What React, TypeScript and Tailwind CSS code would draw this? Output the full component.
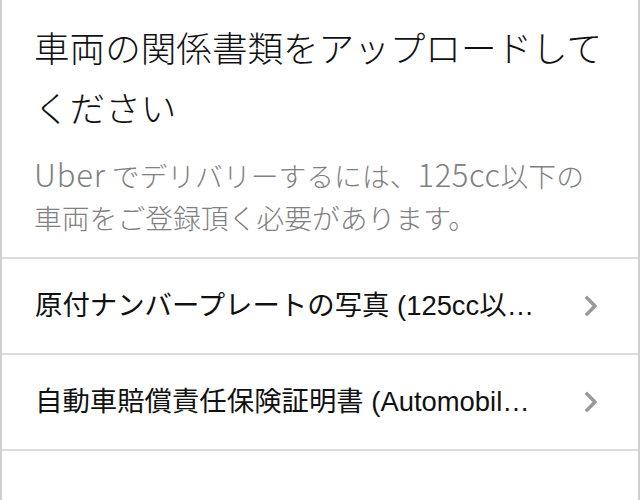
import React from "react";

const Chevron = () => (
  <svg width="16" height="22" viewBox="0 0 16 22" className="shrink-0">
    <path d="M4 3 L12 11 L4 19" fill="none" stroke="#999999" strokeWidth="3.4" strokeLinecap="square" strokeLinejoin="miter" />
  </svg>
);

const Row = ({ text }: { text: string }) => (
  <div className="flex items-center h-[96px] pl-[33px] pr-[39px] border-b-2 border-[#dcdcdc]">
    <div
      className="flex-1 min-w-0 truncate text-[27.4px] text-[#111] pr-[40px]"
      style={{ fontFamily: '"Liberation Sans", "Noto Sans CJK JP", sans-serif' }}
    >
      {text}
    </div>
    <Chevron />
  </div>
);

export default function App() {
  return (
    <div className="w-[640px] h-[500px] bg-white border-x-2 border-[#cfcfcf] overflow-hidden">
      <div
        className="pt-[17px] pb-[19px] pl-[32px] border-b-2 border-[#dcdcdc]"
        style={{ fontFamily: '"Noto Sans CJK JP", sans-serif' }}
      >
        <h1 className="pr-[34px] text-[35.6px] leading-[60px] font-light text-[#111]">
          車両の関係書類をアップロードしてください
        </h1>
        <p className="mt-[17px] pr-[46px] text-[27.8px] leading-[42px] font-light text-[#808080]">
          <span className="text-[31px] leading-[20px] tracking-[0.8px]">Uber</span>
          {"  "}でデリバリーするには、<span className="text-[31px] leading-[20px] tracking-[0.6px]">125cc</span>以下の車両をご登録頂く必要があります。
        </p>
      </div>
      <Row text="原付ナンバープレートの写真 (125cc以下のバイク)" />
      <Row text="自動車賠償責任保険証明書 (Automobile Liability Insurance)" />
    </div>
  );
}
